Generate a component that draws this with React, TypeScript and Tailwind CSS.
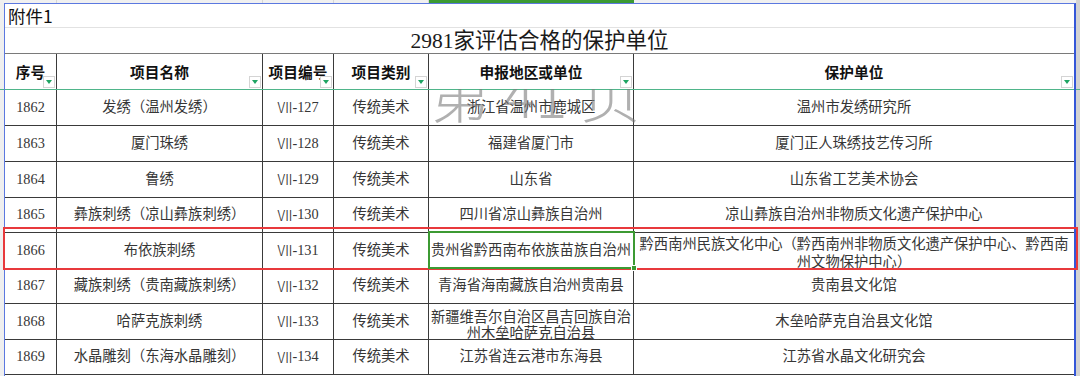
import React from 'react';

type Row = {
  h: string;
  no: string;
  name: string;
  code: string;
  cat: string;
  area: string[];
  unit: string[];
};

const rows: Row[] = [
  { h: 'h-[36px]', no: '1862', name: '发绣（温州发绣）', code: '-127', cat: '传统美术', area: ['浙江省温州市鹿城区'], unit: ['温州市发绣研究所'] },
  { h: 'h-[36px]', no: '1863', name: '厦门珠绣', code: '-128', cat: '传统美术', area: ['福建省厦门市'], unit: ['厦门正人珠绣技艺传习所'] },
  { h: 'h-[36px]', no: '1864', name: '鲁绣', code: '-129', cat: '传统美术', area: ['山东省'], unit: ['山东省工艺美术协会'] },
  { h: 'h-[35px]', no: '1865', name: '彝族刺绣（凉山彝族刺绣）', code: '-130', cat: '传统美术', area: ['四川省凉山彝族自治州'], unit: ['凉山彝族自治州非物质文化遗产保护中心'] },
  { h: 'h-[36px]', no: '1866', name: '布依族刺绣', code: '-131', cat: '传统美术', area: ['贵州省黔西南布依族苗族自治州'], unit: ['黔西南州民族文化中心（黔西南州非物质文化遗产保护中心、黔西南', '州文物保护中心）'] },
  { h: 'h-[35px]', no: '1867', name: '藏族刺绣（贵南藏族刺绣）', code: '-132', cat: '传统美术', area: ['青海省海南藏族自治州贵南县'], unit: ['贵南县文化馆'] },
  { h: 'h-[36px]', no: '1868', name: '哈萨克族刺绣', code: '-133', cat: '传统美术', area: ['新疆维吾尔自治区昌吉回族自治', '州木垒哈萨克自治县'], unit: ['木垒哈萨克自治县文化馆'] },
  { h: 'h-[35px]', no: '1869', name: '水晶雕刻（东海水晶雕刻）', code: '-134', cat: '传统美术', area: ['江苏省连云港市东海县'], unit: ['江苏省水晶文化研究会'] },
];

const colW = ['w-[52px]', 'w-[206px]', 'w-[71px]', 'w-[95px]', 'w-[205px]', 'w-[440px]'];
const headers = ['序号', '项目名称', '项目编号', '项目类别', '申报地区或单位', '保护单位'];

const serif = "font-['Liberation_Serif','Noto_Sans_CJK_SC',serif]";

function Filter() {
  return (
    <div className="absolute right-[1px] bottom-[1px] w-[12px] h-[12px] bg-white border border-[#d4d4d4] flex items-center justify-center">
      <div className="w-0 h-0 border-l-[3px] border-r-[3px] border-t-[4px] border-l-transparent border-r-transparent border-t-[#1fa463]" />
    </div>
  );
}

function Cell({ i, lines }: { i: number; lines: string[] }) {
  const last = i === 5;
  const multi = lines.length > 1;
  return (
    <div
      className={`${colW[i]} ${last ? '' : 'border-r border-[#3a3a3a]'} h-full flex ${
        multi ? (i === 5 ? 'flex-col items-center justify-start pt-[2px] leading-[18px]' : 'flex-col items-center justify-start pt-[5px] leading-[16px]') : 'items-center justify-center'
      } overflow-hidden whitespace-nowrap text-[14.3px] text-[#363636]`}
    >
      {lines.map((l) => (
        <span key={l} className="block text-center">
          {l}
        </span>
      ))}
    </div>
  );
}

function CodeCell({ code }: { code: string }) {
  return (
    <div className={`${colW[2]} border-r border-[#3a3a3a] h-full flex items-center justify-center whitespace-nowrap text-[14.3px] text-[#363636]`}>
      <span className="font-['Noto_Sans_CJK_SC',sans-serif] font-light text-[15px]">Ⅶ</span>
      <span>{code}</span>
    </div>
  );
}

export default function App() {
  return (
    <div className={`relative w-[1080px] h-[376px] overflow-hidden bg-white flex ${serif}`}>
      {/* 左侧行号区 */}
      <div className="w-[4px] flex flex-col">
        <div className="h-[89px] bg-[#efefef]" />
        <div className="h-[1px] bg-[#4fb58a]" />
        <div className="flex-1 bg-[#efefef]" />
      </div>

      <div className="w-[1072px] flex flex-col">
        {/* 列头条 */}
        <div className="h-[3px] flex bg-[#f0f0f0]">
          <div className="w-[53px] border-r border-[#d6d6d6]" />
          <div className="w-[206px] border-r border-[#d6d6d6]" />
          <div className="w-[71px] border-r border-[#d6d6d6]" />
          <div className="w-[95px] border-r border-[#d6d6d6]" />
          <div className="w-[205px] bg-[#3c9a33]" />
          <div className="flex-1" />
        </div>

        <div className="flex-1 border-t border-l border-r-2 border-t-[#5b78e0] border-l-[#5b78e0] border-r-[#3456d8] flex flex-col">
          <div className="h-[24px] border-b border-[#e2e2e2] flex items-center pl-[3px] font-['Noto_Sans_CJK_SC',sans-serif] text-[17.5px] text-[#111] leading-none">
            附件1
          </div>
          <div className="h-[26px] border-b border-[#7a7a7a] flex items-center justify-center pt-[2px] text-[21.5px] text-[#1a1a1a] leading-none">
            2981家评估合格的保护单位
          </div>
          <div className="h-[36px] border-b border-[#4fb58a] flex">
            {headers.map((t, i) => (
              <div
                key={t}
                className={`${colW[i]} ${i === 5 ? '' : 'border-r border-[#3a3a3a]'} relative h-full flex items-center justify-center pt-[3px] font-bold text-[14.7px] text-[#111]`}
              >
                {t}
                <Filter />
              </div>
            ))}
          </div>
          {rows.map((r) => (
            <div key={r.no} className={`${r.h} border-b border-[#3a3a3a] flex`}>
              <Cell i={0} lines={[r.no]} />
              <Cell i={1} lines={[r.name]} />
              <CodeCell code={r.code} />
              <Cell i={3} lines={[r.cat]} />
              <Cell i={4} lines={r.area} />
              <Cell i={5} lines={r.unit} />
            </div>
          ))}
        </div>
      </div>

      {/* 右侧滚动条区 */}
      <div className="w-[4px] flex flex-col">
        <div className="h-[89px] bg-[#d2d2d2]" />
        <div className="h-[1px] bg-[#4fb58a]" />
        <div className="flex-1 bg-[#d2d2d2]" />
      </div>

      {/* 水印 */}
      <div className="pointer-events-none absolute left-0 right-0 top-[89px] bottom-0 overflow-hidden">
        <div className="absolute left-[430px] top-[-27px] whitespace-pre font-['Noto_Sans_CJK_SC',sans-serif] font-light text-[60px] leading-none text-[#7c7c7c]/60">
          第 41 页
        </div>
      </div>

      {/* 选中框 */}
      <div className="pointer-events-none absolute left-[3px] top-[227px] w-[1075px] h-[43px] border-2 border-[#e8393c]" />
      <div className="pointer-events-none absolute left-[428px] top-[231px] w-[207px] h-[38px] border-2 border-[#3c9a33]">
        <div className="absolute right-[-4px] bottom-[-4px] w-[6px] h-[6px] bg-[#3c9a33] border border-white" />
      </div>
    </div>
  );
}
